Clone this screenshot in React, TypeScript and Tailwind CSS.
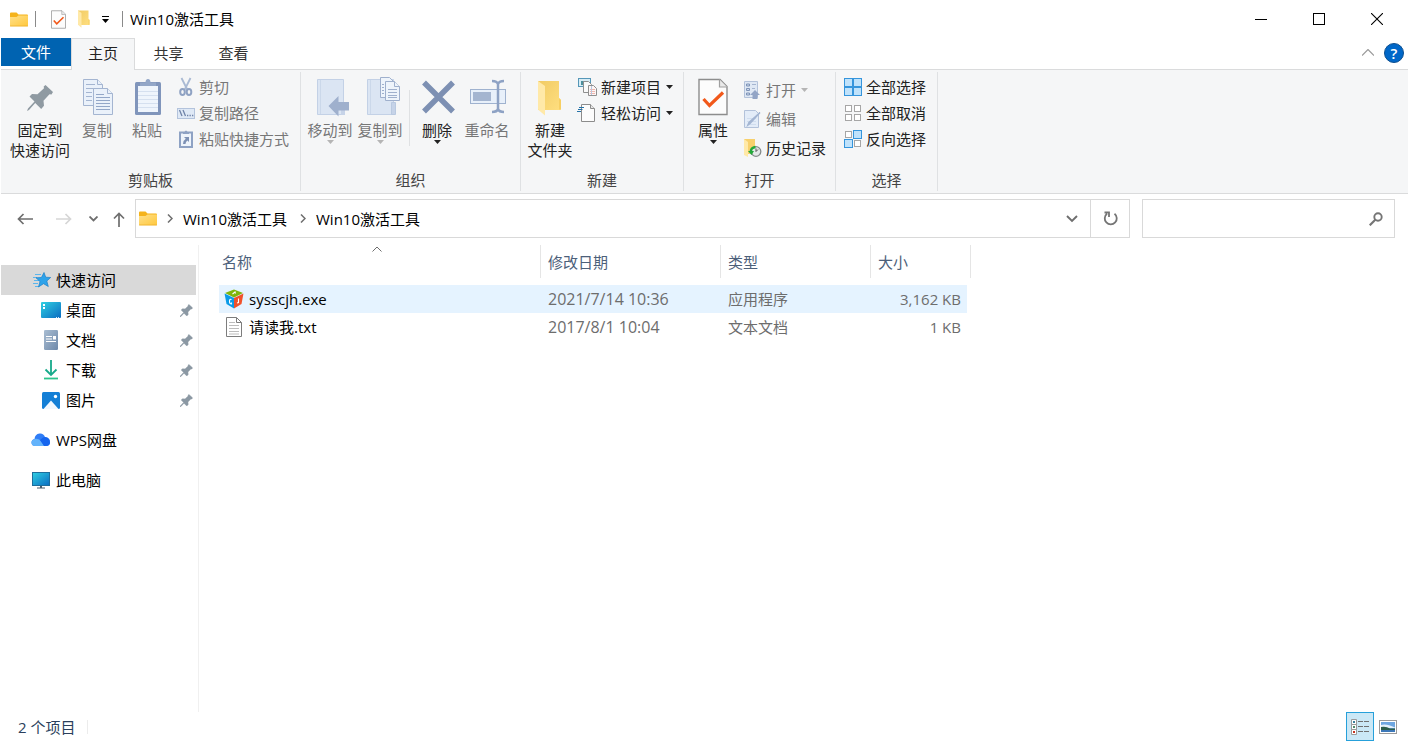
import React from 'react';
import clsx from 'clsx';

type IconProps = { className?: string };

/* ---------- shared glyphs ---------- */

const Caret = ({ className }: IconProps) => (
  <svg width="7" height="4" viewBox="0 0 7 4" className={clsx('shrink-0', className)} fill="currentColor">
    <path d="M0 0h7L3.5 4z" />
  </svg>
);

const FolderIcon = () => (
  <svg width="18" height="15" viewBox="0 0 18 15" className="shrink-0">
    <defs>
      <linearGradient id="folder" x1="0" y1="0" x2="1" y2="1">
        <stop offset="0" stopColor="#ffe08a" />
        <stop offset="1" stopColor="#ffc83d" />
      </linearGradient>
    </defs>
    <path d="M0 1.5Q0 .5 1 .5h5.500L8.500 2.500H17q1 0 1 1V8H0z" fill="#f5b31b" />
    <path d="M0 5h6.500L8.500 3.500H18V13.500q0 .8-.8.8H.8Q0 14.300 0 13.500z" fill="url(#folder)" />
    <path d="M0 14h18" stroke="#eeb12e" strokeWidth=".8" />
  </svg>
);

const OpenFolder = ({ w, h }: { w: number; h: number }) => (
  <svg width={w} height={h} viewBox="0 0 26 36" className="shrink-0">
    <defs>
      <linearGradient id="openFolder" x1="0" y1="0" x2="1" y2="1">
        <stop offset="0" stopColor="#f1cb64" />
        <stop offset="1" stopColor="#ffdf80" />
      </linearGradient>
    </defs>
    <path d="M1 1h21v17l2 2v9q0 1-1 1H9L1 30z" fill="url(#openFolder)" />
    <path d="M1 1l7 5v29.500L1.500 30Q1 29.500 1 29z" fill="#ffe9a8" />
    <path d="M22 18l2 2v9.500h-2z" fill="#f7cf63" />
  </svg>
);

const CheckDoc = ({ w, h }: { w: number; h: number }) => (
  <svg width={w} height={h} viewBox="0 0 30 38" className="shrink-0">
    <path d="M1 1.500h21l7 7v28H1z" fill="#fcfcfc" stroke="#8d8d8d" strokeWidth="1.400" />
    <path d="M21.500 1.500v7.500H29" fill="#e9e9e9" stroke="#a0a0a0" strokeWidth="1.200" />
    <path d="M5.500 21l6 6.500L25 14.500" fill="none" stroke="#f1581a" strokeWidth="3.200" />
  </svg>
);

const pinPath =
  'M18.500 1L26 8l-1.500 2.500-2-.3-6 6.500.5 5-2.800 3.300-6-6L2 26l-2 1 1-2.500 6.500-7L2.500 12.500l2.500-2.500 5.500.2 6.500-6-.3-1.700z';

const Pin = () => (
  <svg width="13" height="13" viewBox="0 0 27 27" className="mr-[3px] shrink-0">
    <path d={pinPath} fill="#8b98a3" stroke="#8b98a3" />
  </svg>
);

/* ---------- large ribbon icons, all on a 40px box ---------- */

const BigIcon = ({ children }: { children: React.ReactNode }) => (
  <svg width="40" height="42" viewBox="0 0 40 42" fill="none" className="overflow-visible">
    {children}
  </svg>
);

const PinLarge = () => (
  <BigIcon>
    <path d={pinPath} transform="translate(7 6)" fill="#8f9aa2" />
  </BigIcon>
);

const CopyLarge = () => (
  <BigIcon>
    <g fill="#eaf1fa" stroke="#a4b5d1">
      <path d="M6.500 1.500h14l5 5v21h-19z" />
      <path d="M20.500 1.500v5h5M9 6.500h9M9 10.500h12M9 14.500h6M9 18.500h6M9 22.500h6" />
      <path d="M16.500 10.500h14l5 5v21h-19z" />
      <path d="M30.500 10.500v5h5" />
    </g>
    <path d="M19 16.500h8M19 19.500h14M19 22.500h14M19 25.500h14M19 28.500h14M19 31.500h14" stroke="#93a7c8" />
  </BigIcon>
);

const PasteLarge = () => (
  <BigIcon>
    <rect x="8" y="4" width="26" height="33" rx="1.500" fill="#8095bb" />
    <rect x="11" y="8" width="20" height="26" fill="#eff5fc" />
    <path d="M11 13.500h20M11 17.500h20M11 21.500h20M11 25.500h20M11 29.500h20" stroke="#d5e0ef" />
    <path d="M13 8V4.500h5.500Q18.500 1 21 1t2.500 3.500H29V8z" fill="#93a7c8" />
  </BigIcon>
);

const MoveLarge = () => (
  <BigIcon>
    <path d="M7.500 1.500h26v35h-26z" fill="#dbe5f3" stroke="#c3d1e6" />
    <path d="M10.500 2v34" stroke="#cbd8ea" />
    <path d="M31 24h4v13h-4z" fill="#c6d3e8" />
    <path d="M18.500 28l10-10v6H39v8.500H28.500v6z" fill="#9fb0cd" />
  </BigIcon>
);

const CopyToLarge = () => (
  <BigIcon>
    <path d="M7.500 1.500h26v35h-26z" fill="#dbe5f3" stroke="#c3d1e6" />
    <path d="M10.500 2v34" stroke="#cbd8ea" />
    <path d="M31.500 24.500h4v12h-4z" fill="#c6d3e8" stroke="#b9c9e0" />
    <g fill="#eef4fb" stroke="#9fb0cd">
      <path d="M20.500 -.500h9l4 4v16h-13z" />
      <path d="M25.500 3.500h9l5 5v14h-14z" />
      <path d="M34.500 3.500v5h5M28 11.500h9M28 14.500h9M28 17.500h9M28 19.500h9M22 6.500h2M22 9.500h2M22 12.500h2M22 15.500h2" />
    </g>
  </BigIcon>
);

const DeleteLarge = () => (
  <BigIcon>
    <path d="M7 4.500l29 29M36 4.500L7 33.500" stroke="#7d90b3" strokeWidth="5.500" />
  </BigIcon>
);

const RenameLarge = () => (
  <BigIcon>
    <rect x="3.500" y="11.500" width="35" height="14" fill="#e8f0fa" stroke="#9fb2cf" />
    <rect x="6" y="14" width="18" height="9" fill="#a4b5d0" />
    <path d="M31 5v27M25 3q5 0 6 3 1-3 6-3M25 34q5 0 6-3 1 3 6 3" stroke="#8ea2c4" strokeWidth="2.500" />
  </BigIcon>
);

const NewFolderLarge = () => (
  <span className="flex h-[42px] items-start pt-px">
    <OpenFolder w={26} h={38} />
  </span>
);

const PropertiesLarge = () => (
  <span className="flex h-[42px] items-start">
    <CheckDoc w={30} h={38} />
  </span>
);

/* ---------- small ribbon icons, all on an 18px box ---------- */

const SmallIcon = ({ children }: { children: React.ReactNode }) => (
  <svg width="18" height="18" viewBox="0 0 18 18" fill="none" className="shrink-0 overflow-visible">
    {children}
  </svg>
);

const CutIcon = () => (
  <SmallIcon>
    <path d="M4.500 0l6 12M13.500 0L7.500 12" stroke="#a9b9d3" strokeWidth="1.800" />
    <ellipse cx="5.500" cy="14" rx="2.300" ry="3" stroke="#8fa2c3" strokeWidth="2" />
    <ellipse cx="12" cy="14" rx="2.300" ry="3" stroke="#8fa2c3" strokeWidth="2" />
  </SmallIcon>
);

const PathIcon = () => (
  <SmallIcon>
    <rect x=".5" y="4.500" width="17" height="10" fill="#dfe9f6" stroke="#b3c3dc" />
    <path d="M2.500 6l2.500 6M6 6l2.500 6M10 11.500h1.300M12.500 11.500h1.300M15 11.500h1.300" stroke="#6f83a8" strokeWidth="1.300" />
  </SmallIcon>
);

const ShortcutIcon = () => (
  <SmallIcon>
    <rect x="3" y="2.500" width="12" height="14.500" fill="#eef4fb" stroke="#8ea2c4" strokeWidth="2" />
    <path d="M6 4V2h1.500Q9 -1 10.500 2H12v2z" fill="#8ea2c4" />
    <path d="M7 7h5v5l-1.500-1.500Q8.500 11.500 8.500 14H6Q6 10.500 8.800 8.800z" fill="#7d91b5" />
  </SmallIcon>
);

const NewItemIcon = () => (
  <SmallIcon>
    <rect x="-.5" y=".5" width="12" height="8" fill="#d7ecf5" stroke="#5597b8" />
    <path d="M2 3h3v4H2z" fill="#4d8f9c" />
    <path d="M4.500 3.500h5l3 3v8h-8z" fill="#fafafa" stroke="#8f8f8f" />
    <path d="M9.500 7.500h5l3 3v7h-8z" fill="#fdf6f5" stroke="#8f8f8f" />
    <path d="M11 11.500h5M11 13.500h5M11 15.500h5" stroke="#efb6ae" />
    <path d="M12.500 8v9" stroke="#b9c8e0" />
  </SmallIcon>
);

const EasyAccessIcon = () => (
  <SmallIcon>
    <path d="M2.500 .500h9l4 4v13h-13z" fill="#fcfcfc" stroke="#8c8c8c" />
    <path d="M11.500 .500v4h4" fill="#e6e6e6" stroke="#8c8c8c" />
    <path d="M0 3.500h5M-1 5.500h4.500M-2 7.500h4" stroke="#2673a8" />
  </SmallIcon>
);

const OpenIcon = () => (
  <SmallIcon>
    <path d="M.5 .500h13v16H.500z" fill="#dfe8f4" stroke="#b3c2da" />
    <path d="M2.500 3h3v2h-3zM2.500 7.500h3v2h-3zM2.500 12h3v2h-3z" fill="#cbd8ea" stroke="#7f94b8" />
    <path d="M8 3.500h4M8 7.500h3" stroke="#a5b5d0" />
    <path d="M11 9l5 5h-2.500v4h-5v-4H6z" fill="#93a5c6" />
  </SmallIcon>
);

const EditIcon = () => (
  <SmallIcon>
    <path d="M.5 .500h11l3 3v14H.500z" fill="#e3ecf8" stroke="#b3c2da" />
    <path d="M3 14.500h9M3 11.500h9M3 8.500h9" stroke="#d0ddee" />
    <path d="M16 2.500L6 13.500l-2 1.500 1-2.500z" fill="#a3b5d2" stroke="#a3b5d2" strokeWidth="1.500" />
  </SmallIcon>
);

const HistoryIcon = () => (
  <SmallIcon>
    <path d="M0 0h11v15H0z" fill="#f7d06c" />
    <path d="M0 0l4 3v15l-4-2z" fill="#ffe9a8" />
    <circle cx="12" cy="12.500" r="4.800" fill="#e3e8e8" stroke="#858b8b" strokeWidth="1.300" />
    <path d="M12 9.500v3l2-2" stroke="#555" />
    <path d="M11.500 8Q6.500 8.500 7 13" stroke="#22a83a" strokeWidth="2.500" />
    <path d="M4 12h6l-2.500 4z" fill="#22a83a" />
  </SmallIcon>
);

const cells = [
  [0, 0],
  [9, 0],
  [0, 9],
  [9, 9],
];

const SelectAllIcon = () => (
  <SmallIcon>
    {cells.map(([x, y]) => (
      <rect key={`${x}-${y}`} x={x + 0.5} y={y + 0.5} width="8" height="8" fill="#bfe2fb" stroke="#3595dc" />
    ))}
  </SmallIcon>
);

const SelectNoneIcon = () => (
  <SmallIcon>
    {cells.map(([x, y]) => (
      <rect key={`${x}-${y}`} x={x + 1.5} y={y + 1.5} width="6" height="6" fill="#fff" stroke="#a6a6a6" />
    ))}
  </SmallIcon>
);

const InvertIcon = () => (
  <SmallIcon>
    <rect x="1.500" y="1.500" width="6" height="6" fill="#fff" stroke="#a6a6a6" />
    <rect x="9.500" y=".500" width="8" height="8" fill="#bfe2fb" stroke="#3595dc" />
    <rect x=".500" y="9.500" width="8" height="8" fill="#bfe2fb" stroke="#3595dc" />
    <rect x="10.500" y="10.500" width="6" height="6" fill="#fff" stroke="#a6a6a6" />
  </SmallIcon>
);

/* ---------- sidebar icons ---------- */

const StarIcon = () => (
  <svg width="18" height="16" viewBox="0 0 18 16" fill="none">
    <path d="M2 2.500h6M0 5.500h4M1 8.500h5M0 11.500h5M2 14.500h4" stroke="#5bb5ec" />
    <path
      d="M11 .500l1.700 4.700 5 .3-3.900 3.500 1.500 5.500-4.800-2.800-5 3.300 1.500-5.500-4-3.700 5.400-.3z"
      fill="#2ea3ea"
      stroke="#1b7fc9"
      strokeWidth=".7"
    />
  </svg>
);

const DesktopIcon = () => (
  <svg width="20" height="16" viewBox="0 0 20 16">
    <defs>
      <linearGradient id="screen" x1="0" y1="0" x2="1" y2="1">
        <stop offset="0" stopColor="#2fd0e2" />
        <stop offset="1" stopColor="#0b6cc2" />
      </linearGradient>
    </defs>
    <rect width="20" height="16" rx="1" fill="url(#screen)" />
    <path d="M2 2h2v2H2zM2 5h2v2H2z" fill="#fff" />
    <path d="M15 15h1v1h-1zM17 15h1v1h-1z" fill="#cfe8fa" />
  </svg>
);

const DocumentIcon = () => (
  <svg width="14" height="20" viewBox="0 0 14 20">
    <defs>
      <linearGradient id="doc" x1="0" y1="0" x2="1" y2="1">
        <stop offset="0" stopColor="#a9bdd2" />
        <stop offset="1" stopColor="#6e89aa" />
      </linearGradient>
    </defs>
    <rect width="14" height="20" rx="1.200" fill="url(#doc)" />
    <path d="M2 6h6v1H2zM2 8.500h6v1H2zM9 6h3v3.500H9zM2 11h10v1H2z" fill="#fff" />
  </svg>
);

const DownloadIcon = () => (
  <svg width="16" height="20" viewBox="0 0 16 20" fill="none" strokeWidth="1.800">
    <path d="M8 0v14.500M2.500 9.500L8 15l5.500-5.500" stroke="#16a98a" />
    <path d="M1 18.500h14" stroke="#2bc48c" />
  </svg>
);

const PictureIcon = () => (
  <svg width="18" height="17" viewBox="0 0 18 17">
    <rect width="18" height="17" rx="1.500" fill="#147fd6" />
    <path d="M1.500 17L9 8.500l7.500 8.500z" fill="#f1f8ff" />
    <circle cx="13.500" cy="4.500" r="1.700" fill="#fff" />
  </svg>
);

const CloudIcon = () => (
  <svg width="20" height="14" viewBox="0 0 20 14">
    <path d="M3.500 13Q.5 12.500 .5 9.500T3.500 6Q4 1 8.500 .500q4-.5 5.500 3.500 5 .5 5 5 0 4-4 4z" fill="#2f7df6" />
    <path d="M3.500 13Q.5 12.500 .5 9.500T4 6q4-.8 6.500 3l3 4z" fill="#63b3fb" />
    <path d="M9 7l3-2.500q4-1.500 6.500 2.500l.5 3q-.5 3-4 3h-2z" fill="#1565ee" />
  </svg>
);

const ComputerIcon = () => (
  <svg width="18" height="17" viewBox="0 0 18 17">
    <rect x=".5" y=".5" width="17" height="13" fill="url(#screen)" stroke="#1d6e9c" />
    <path d="M8 14h2v1.500h3v1H5v-1h3z" fill="#4b5d6b" />
  </svg>
);

/* ---------- file icons ---------- */

const CubeIcon = () => (
  <svg width="20" height="20" viewBox="0 0 20 20">
    <path d="M10 .500l9 3.500-9 4.500L1 4z" fill="#7fb50d" />
    <path d="M.5 4.500L10 9v10.500l-7.500-4.500z" fill="#0a9be8" />
    <path d="M19.500 4.500L10 9v10.500l7.500-4.500z" fill="#f1512b" />
    <g fill="none" stroke="#fff" strokeWidth="1.100">
      <path d="M8.500 5l2.500-2 .5 1.500" />
      <path d="M7.500 10.500q-2-1-2 2 0 2.500 2 2.500v-1.500" />
      <path d="M14.500 9.500v4l-1.500.5" />
    </g>
  </svg>
);

const TextFileIcon = () => (
  <svg width="16" height="20" viewBox="0 0 16 20" fill="none" stroke="#7d7d7d">
    <path d="M.5 .500h10l5 5v14H.500z" fill="#fff" />
    <path d="M10.500 .500v5h5" />
    <path d="M3 5.500h6M3 8.500h10M3 11.500h10M3 14.500h10M3 17h10" stroke="#bcbcbc" />
  </svg>
);

/* ---------- ribbon building blocks ---------- */

type BigButtonProps = {
  icon: React.ReactNode;
  label: string;
  second?: string;
  wide?: boolean;
  disabled?: boolean;
  menu?: boolean;
};

const BigButton = ({ icon, label, second, wide, disabled, menu }: BigButtonProps) => (
  <button
    disabled={disabled}
    className={clsx(
      'flex flex-col items-center whitespace-nowrap leading-5',
      wide ? 'w-16' : 'w-[50px]',
      disabled ? 'text-[#777]' : 'text-[#222]',
    )}
  >
    {icon}
    <span>{label}</span>
    {second && <span>{second}</span>}
    {menu && <Caret className={disabled ? 'text-[#b5b5b5]' : ''} />}
  </button>
);

type SmallButtonProps = { icon: React.ReactNode; label: string; disabled?: boolean; menu?: boolean };

const SmallButton = ({ icon, label, disabled, menu }: SmallButtonProps) => (
  <button
    disabled={disabled}
    className={clsx('flex items-center gap-1 leading-[18px]', disabled ? 'text-[#777]' : 'text-[#222]')}
  >
    {icon}
    <span>{label}</span>
    {menu && <Caret className={clsx('ml-px', disabled && 'text-[#b5b5b5]')} />}
  </button>
);

const Group = ({ title, className, children }: { title: string; className: string; children: React.ReactNode }) => (
  <section aria-label={title} className="my-0.5 flex flex-col border-r border-[#dfe1e3] pt-1.5 pb-px">
    <div className={clsx('flex h-[92px] items-start', className)}>{children}</div>
    <div className="text-center leading-5 text-[#444]">{title}</div>
  </section>
);

/* ---------- page sections ---------- */

const TitleBar = () => (
  <header className="flex h-[38px] items-center pl-[9px] pr-0.5">
    <FolderIcon />
    <span className="ml-[7px] h-4 w-px bg-[#8a8a8a]" />
    <button aria-label="属性" className="ml-[15px]">
      <CheckDoc w={15} h={19} />
    </button>
    <button aria-label="新建文件夹" className="ml-[11px]">
      <OpenFolder w={14} h={18} />
    </button>
    <button aria-label="自定义快速访问工具栏" className="ml-[11px] flex flex-col gap-0.5">
      <span className="h-px w-[7px] bg-black" />
      <Caret />
    </button>
    <span className="ml-[13px] h-4 w-px bg-[#8a8a8a]" />
    <h1 className="ml-[7px]">Win10激活工具</h1>
    <div className="ml-auto flex h-full">
      <button aria-label="最小化" className="flex w-[58px] items-center justify-center">
        <span className="h-px w-3 bg-black" />
      </button>
      <button aria-label="最大化" className="flex w-[58px] items-center justify-center">
        <span className="size-3 border border-black" />
      </button>
      <button aria-label="关闭" className="flex w-[58px] items-center justify-center">
        <svg width="12" height="12" viewBox="0 0 12 12" stroke="#000" strokeWidth="1.100">
          <path d="M0 0l12 12M12 0L0 12" />
        </svg>
      </button>
    </div>
  </header>
);

const TabBar = () => (
  <nav className="flex h-8 items-start border-b border-[#dadbdc]">
    <button className="h-7 w-[70px] bg-[#0063b1] text-white">文件</button>
    <button className="h-8 w-16 border border-b-0 border-[#dadbdc] bg-[#f5f6f7] pb-[3px] text-[#222]">主页</button>
    <button className="h-[31px] w-[65px] pb-0.5 pl-0.5 text-[#333]">共享</button>
    <button className="h-[31px] w-[65px] pb-0.5 pl-0.5 text-[#333]">查看</button>
    <div className="ml-auto flex h-[31px] items-center gap-2.5 pb-0.5 pr-1">
      <button aria-label="最小化功能区">
        <svg width="12" height="7" viewBox="0 0 12 7" fill="none" stroke="#9a9a9a" strokeWidth="1.200">
          <path d="M0 6.500l6-6 6 6" />
        </svg>
      </button>
      <button className="flex size-5 items-center justify-center rounded-full border border-[#0d4f8f] bg-[#0067c8] font-semibold leading-5 text-white">
        ?
      </button>
    </div>
  </nav>
);

const Ribbon = () => (
  <div className="flex border-b border-[#dadbdc] bg-[#f5f6f7]">
    <Group title="剪贴板" className="pl-[7px] pr-[11px]">
      <BigButton icon={<PinLarge />} label="固定到" second="快速访问" wide />
      <BigButton icon={<CopyLarge />} label="复制" disabled />
      <BigButton icon={<PasteLarge />} label="粘贴" disabled />
      <div className="ml-[5px] flex flex-col gap-2">
        <SmallButton icon={<CutIcon />} label="剪切" disabled />
        <SmallButton icon={<PathIcon />} label="复制路径" disabled />
        <SmallButton icon={<ShortcutIcon />} label="粘贴快捷方式" disabled />
      </div>
    </Group>
    <Group title="组织" className="pl-1 pr-2">
      <BigButton icon={<MoveLarge />} label="移动到" disabled menu />
      <BigButton icon={<CopyToLarge />} label="复制到" disabled menu />
      <span className="ml-1 mr-0.5 mt-3 h-14 w-px bg-[#dfe1e3]" />
      <BigButton icon={<DeleteLarge />} label="删除" menu />
      <BigButton icon={<RenameLarge />} label="重命名" disabled />
    </Group>
    <Group title="新建" className="pl-1 pr-2.5">
      <BigButton icon={<NewFolderLarge />} label="新建" second="文件夹" />
      <div className="ml-1 flex flex-col gap-2">
        <SmallButton icon={<NewItemIcon />} label="新建项目" menu />
        <SmallButton icon={<EasyAccessIcon />} label="轻松访问" menu />
      </div>
    </Group>
    <Group title="打开" className="pl-1 pr-[9px]">
      <BigButton icon={<PropertiesLarge />} label="属性" menu />
      <div className="ml-[6px] mt-[3px] flex flex-col gap-[11px]">
        <SmallButton icon={<OpenIcon />} label="打开" disabled menu />
        <SmallButton icon={<EditIcon />} label="编辑" disabled />
        <SmallButton icon={<HistoryIcon />} label="历史记录" />
      </div>
    </Group>
    <Group title="选择" className="pl-2 pr-[11px]">
      <div className="flex flex-col gap-2">
        <SmallButton icon={<SelectAllIcon />} label="全部选择" />
        <SmallButton icon={<SelectNoneIcon />} label="全部取消" />
        <SmallButton icon={<InvertIcon />} label="反向选择" />
      </div>
    </Group>
  </div>
);

const Chevron = () => (
  <svg width="6" height="9" viewBox="0 0 6 9" fill="none" stroke="#6d6d6d" strokeWidth="1.500">
    <path d="M1 .500l4 4-4 4" />
  </svg>
);

const AddressRow = () => (
  <div className="flex items-center py-[5px] pr-[13px]">
    <div className="flex w-[134px] shrink-0 items-center pl-4">
      <button aria-label="后退">
        <svg width="16" height="12" viewBox="0 0 16 12" fill="none" stroke="#6e6e6e" strokeWidth="1.700">
          <path d="M16 6H1.500M6.500 1l-5 5 5 5" />
        </svg>
      </button>
      <button aria-label="前进" className="ml-[23px]">
        <svg width="16" height="12" viewBox="0 0 16 12" fill="none" stroke="#d6d6d6" strokeWidth="1.700">
          <path d="M0 6h14.500M9.500 1l5 5-5 5" />
        </svg>
      </button>
      <button aria-label="最近浏览的位置" className="ml-[17px]">
        <svg width="9" height="6" viewBox="0 0 9 6" fill="none" stroke="#6e6e6e" strokeWidth="1.800">
          <path d="M.5 .500l4 4 4-4" />
        </svg>
      </button>
      <button aria-label="上移" className="ml-[15px] pt-0.5">
        <svg width="12" height="15" viewBox="0 0 12 15" fill="none" stroke="#6e6e6e" strokeWidth="1.700">
          <path d="M6 15V1.500M1 6.500l5-5 5 5" />
        </svg>
      </button>
    </div>
    <div className="flex h-[39px] flex-1 items-center border border-[#d9d9d9] pl-[3px]">
      <FolderIcon />
      <span className="ml-[10px]">
        <Chevron />
      </span>
      <button className="ml-[10px]">Win10激活工具</button>
      <span className="ml-[13px]">
        <Chevron />
      </span>
      <button className="ml-[10px]">Win10激活工具</button>
      <button aria-label="以前的位置" className="ml-auto px-3">
        <svg width="12" height="8" viewBox="0 0 12 8" fill="none" stroke="#6e6e6e" strokeWidth="1.900">
          <path d="M1 1l5 5 5-5" />
        </svg>
      </button>
      <button aria-label="刷新" className="flex h-full w-[39px] items-center justify-center border-l border-[#d9d9d9]">
        <svg width="15" height="15" viewBox="0 0 15 15" fill="none" stroke="#757575" strokeWidth="1.800">
          <path d="M11.500 2.700a6 6 0 1 1-7.500 0M1.500 1.500h4.500v4.500" />
        </svg>
      </button>
    </div>
    <div className="ml-3 flex h-[39px] w-[253px] items-center border border-[#d9d9d9] pr-[11px]">
      <input aria-label="搜索" className="h-full min-w-0 flex-1 px-2 outline-none" />
      <svg width="14" height="14" viewBox="0 0 14 14" fill="none" stroke="#757575">
        <circle cx="9" cy="5" r="3.700" strokeWidth="1.900" />
        <path d="M6.500 7.500L.7 13.300" strokeWidth="2.200" />
      </svg>
    </div>
  </div>
);

const pinned = [
  { label: '桌面', icon: <DesktopIcon /> },
  { label: '文档', icon: <DocumentIcon /> },
  { label: '下载', icon: <DownloadIcon /> },
  { label: '图片', icon: <PictureIcon /> },
];

const Sidebar = () => (
  <aside className="w-[198px] shrink-0 border-r border-[#f0f0f0] pr-0.5 pt-5">
    <a href="#quick" className="flex h-[30px] items-center gap-[5px] bg-[#d9d9d9] pl-8">
      <StarIcon />
      快速访问
    </a>
    {pinned.map(({ label, icon }) => (
      <a key={label} href={`#${label}`} className="flex h-[30px] items-center pl-10">
        <span className="mr-[5px] flex w-5 justify-center">{icon}</span>
        <span className="flex-1">{label}</span>
        <Pin />
      </a>
    ))}
    <a href="#wps" className="mt-2.5 flex h-[30px] items-center gap-[5px] pl-[30px]">
      <CloudIcon />
      WPS网盘
    </a>
    <a href="#computer" className="mt-2.5 flex h-[30px] items-center gap-1.5 pl-[31px]">
      <ComputerIcon />
      此电脑
    </a>
  </aside>
);

const files = [
  { name: 'sysscjh.exe', date: '2021/7/14 10:36', type: '应用程序', size: '3,162 KB', icon: <CubeIcon /> },
  { name: '请读我.txt', date: '2017/8/1 10:04', type: '文本文档', size: '1 KB', icon: <TextFileIcon /> },
];

const headCell = 'flex h-[33px] items-center border-r border-[#e5e5e5]';

const FileTable = () => (
  <main className="flex-1 pl-5">
    <table className="table-fixed border-collapse text-left">
      <colgroup>
        <col className="w-[322px]" />
        <col className="w-[180px]" />
        <col className="w-[150px]" />
        <col className="w-24" />
        <col className="w-1" />
      </colgroup>
      <thead className="text-[#4c607a]">
        <tr className="h-10 align-top">
          <th className="p-0 font-normal">
            <div className={clsx(headCell, 'relative pl-[3px]')}>
              名称
              <svg width="10" height="6" viewBox="0 0 10 6" fill="none" stroke="#6d6d6d" className="absolute left-1/2 top-px -ml-2">
                <path d="M.5 5.500L5 1l4.500 4.500" />
              </svg>
            </div>
          </th>
          <th className="p-0 font-normal">
            <div className={clsx(headCell, 'pl-[7px]')}>修改日期</div>
          </th>
          <th className="p-0 font-normal">
            <div className={clsx(headCell, 'pl-[7px]')}>类型</div>
          </th>
          <th colSpan={2} className="p-0 font-normal">
            <div className={clsx(headCell, 'pl-[7px]')}>大小</div>
          </th>
        </tr>
      </thead>
      <tbody className="text-[#6d6d6d]">
        {files.map(({ name, date, type, size, icon }, i) => {
          const tint = i === 0 ? 'bg-[#e5f3ff]' : '';
          return (
            <tr key={name} className="h-7">
              <td className={clsx('p-0 pl-[5px] text-black', tint)}>
                <span className="flex items-center gap-[5px]">
                  <span className="flex w-5 justify-center">{icon}</span>
                  {name}
                </span>
              </td>
              <td className={clsx('p-0 pl-[7px] text-base leading-5', tint)}>{date}</td>
              <td className={clsx('p-0 pl-[7px]', tint)}>{type}</td>
              <td className={clsx('p-0 pr-1.5 text-right', tint)}>{size}</td>
              <td className="p-0" />
            </tr>
          );
        })}
      </tbody>
    </table>
  </main>
);

const StatusBar = () => (
  <footer className="flex h-[30px] items-center pb-px pl-[17px] pr-[11px] text-[#2b3f5c]">
    <span>2 个项目</span>
    <span className="ml-3 h-3.5 w-px bg-[#ececec]" />
    <button aria-label="详细信息" className="ml-auto flex h-[29px] w-7 items-center justify-center border border-[#26a0da] bg-[#cbe8f6]">
      <svg width="18" height="16" viewBox="0 0 18 16" fill="none" stroke="#9a9a9a">
        <path d="M.5 .500h5v5h-5zM.5 5.500h5v5h-5zM.5 10.500h5v5h-5z" fill="#fff" />
        <path d="M2 2h2v2H2z" fill="#3a7f9b" stroke="none" />
        <path d="M2 7h2v2H2z" fill="#4f8a6a" stroke="none" />
        <path d="M2 12h2v2H2z" fill="#c8321e" stroke="none" />
        <path d="M7 2.500h5M13 2.500h5M7 7.500h5M13 7.500h5M7 12.500h5M13 12.500h5" stroke="#707070" />
      </svg>
    </button>
    <button aria-label="大缩略图" className="ml-[5px]">
      <svg width="18" height="14" viewBox="0 0 18 14">
        <rect x=".5" y=".5" width="17" height="13" fill="#fff" stroke="#9a9a9a" />
        <rect x="2" y="2" width="14" height="10" fill="#6ea6e0" />
        <path d="M2 5q5-2 14 2.500V8H2z" fill="#e4f0fa" />
        <path d="M2 7q5-1 9 1.500h5V10H2z" fill="#2c5d4a" />
        <path d="M2 10h14v2H2z" fill="#3d78b8" />
      </svg>
    </button>
  </footer>
);

const App: React.FC = () => {
  return (
    <div
      lang="zh-CN"
      className="flex min-h-screen flex-col bg-white pl-px font-['Open_Sans','Noto_Sans_CJK_SC',sans-serif] text-[15px] leading-5 text-black"
    >
      <TitleBar />
      <TabBar />
      <Ribbon />
      <AddressRow />
      <div className="mt-0.5 flex flex-1">
        <Sidebar />
        <FileTable />
      </div>
      <StatusBar />
    </div>
  );
};

export default App;
